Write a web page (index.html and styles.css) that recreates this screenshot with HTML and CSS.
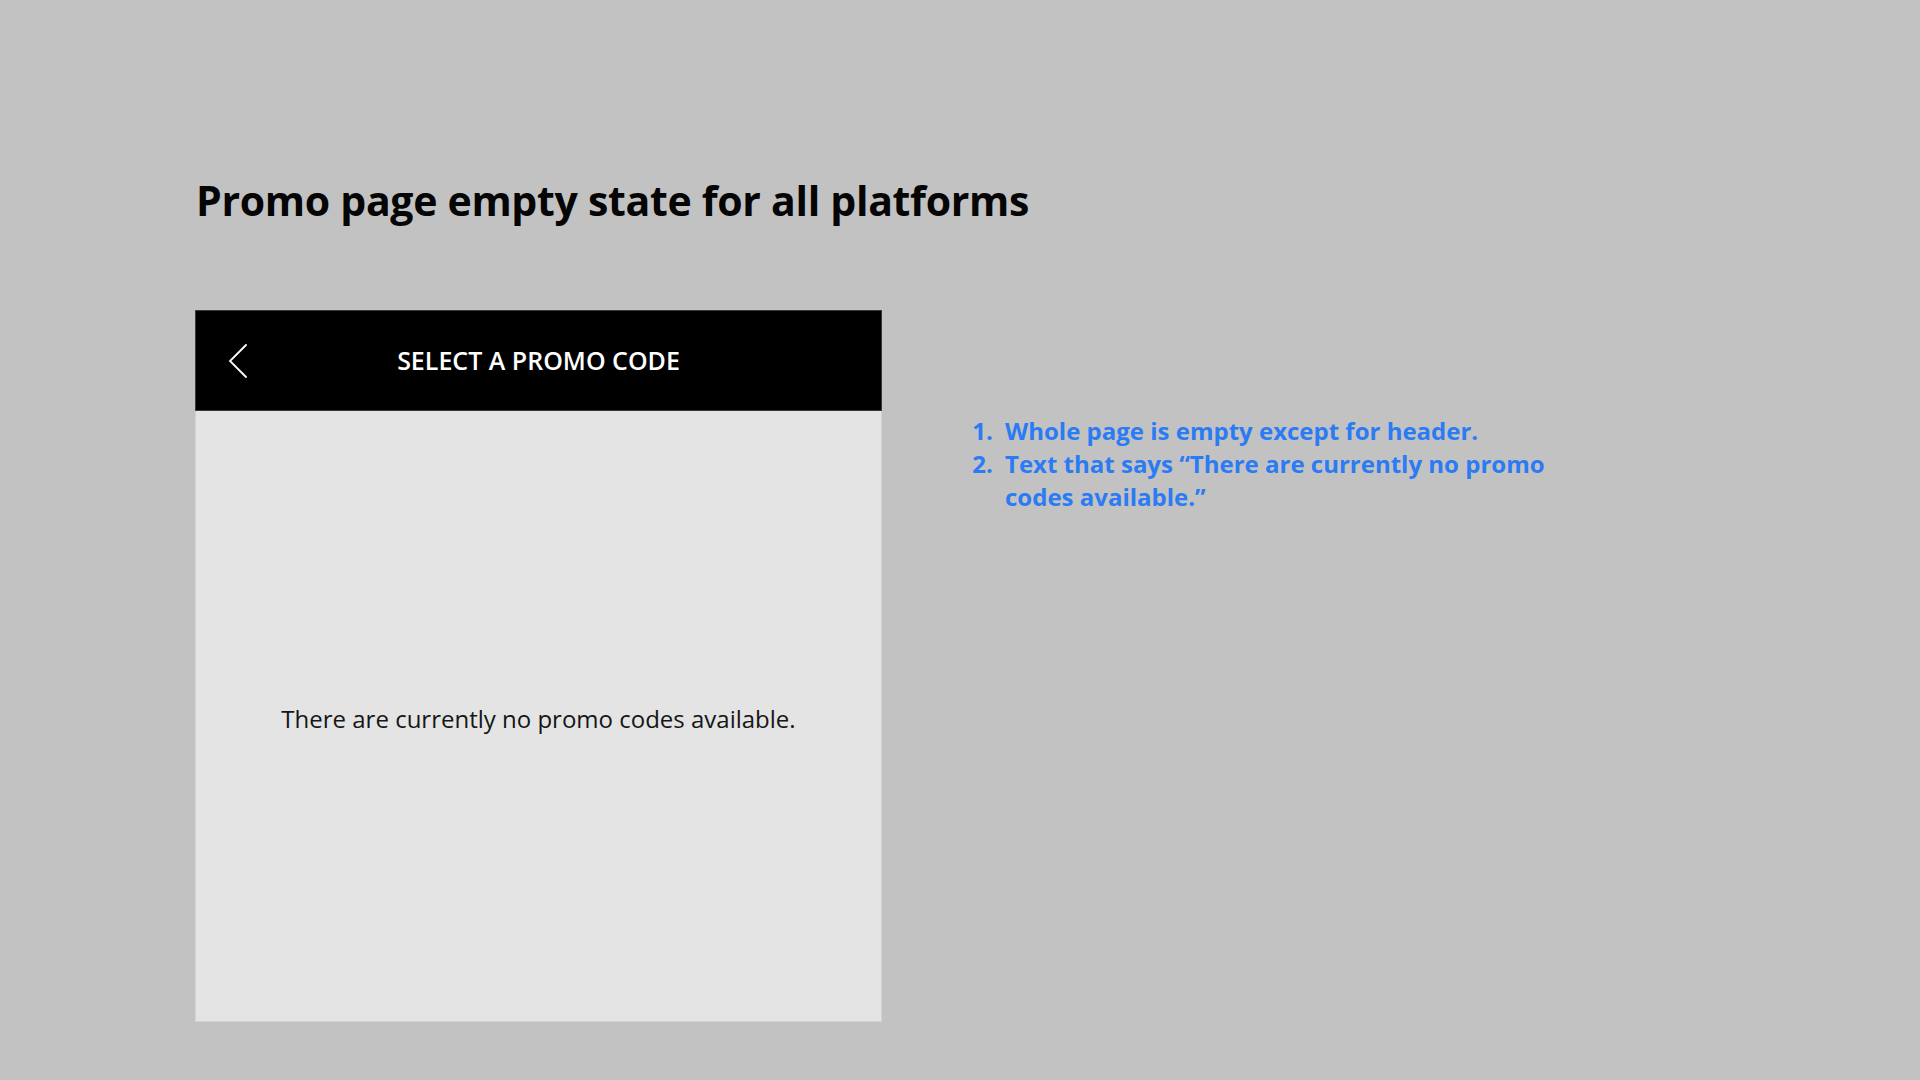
FILE: index.html
```html
<!DOCTYPE html>
<html lang="en">
<head>
<meta charset="utf-8">
<title>Promo page empty state</title>
<link rel="stylesheet" href="styles.css">
</head>
<body>
<main class="board">
  <h1 class="board-title">Promo page empty state for all platforms</h1>
  <div class="board-row">
    <section class="screen">
      <header class="screen-header">
        <button class="back-btn" aria-label="Back">
          <svg width="20" height="34" viewBox="0 0 20 34" fill="none">
            <path d="M18 1 L2 17 L18 33" stroke="#fff" stroke-width="1.8" stroke-linecap="round" stroke-linejoin="miter"/>
          </svg>
        </button>
        <span class="screen-title">SELECT A PROMO CODE</span>
      </header>
      <div class="screen-body">
        <p class="empty-msg">There are currently no promo codes available.</p>
      </div>
    </section>
    <ol class="notes">
      <li>Whole page is empty except for header.</li>
      <li>Text that says “There are currently no promo codes available.”</li>
    </ol>
  </div>
</main>
</body>
</html>
```

FILE: styles.css
```css
* { box-sizing: border-box; }

html, body {
  margin: 0;
  height: 100%;
}

body {
  background: #c2c2c2;
  font-family: "Open Sans", "Noto Sans", sans-serif;
  color: #000;
}

.board {
  padding: 176px 0 0 196px;
}

.board-title {
  margin: 0;
  font-size: 41px;
  font-weight: 700;
  letter-spacing: -0.3px;
  line-height: 48px;
  color: #050505;
}

.board-row {
  display: flex;
  align-items: flex-start;
  margin-top: 86px;
}

.screen {
  width: 687px;
  height: 712px;
  margin-left: -1px;
  display: flex;
  flex-direction: column;
  background: #e4e4e4;
  border: 1px solid #d2d2d2;
}

.screen-header {
  height: 101px;
  flex: none;
  background: #000;
  border: 1px solid #3a3a3a;
  margin: -1px -1px 0;
  display: flex;
  align-items: center;
  justify-content: center;
  position: relative;
}

.back-btn {
  position: absolute;
  left: 32px;
  top: 33px;
  padding: 0;
  border: 0;
  background: none;
  display: flex;
}

.screen-title {
  color: #fff;
  font-size: 25px;
  font-weight: 600;
  letter-spacing: 0;
  margin-top: -2px;
}

.screen-body {
  flex: 1;
  display: flex;
  align-items: center;
  justify-content: center;
}

.empty-msg {
  margin: 0 0 -5px;
  font-size: 24px;
  letter-spacing: 0;
  color: #161616;
}

.notes {
  margin: 104px 0 0 0;
  padding-left: 117px;
  width: 683px;
  font-size: 24px;
  font-weight: 700;
  line-height: 33px;
  letter-spacing: 0;
  color: #2a7bf4;
}

.notes li {
  padding-left: 6px;
}
```
